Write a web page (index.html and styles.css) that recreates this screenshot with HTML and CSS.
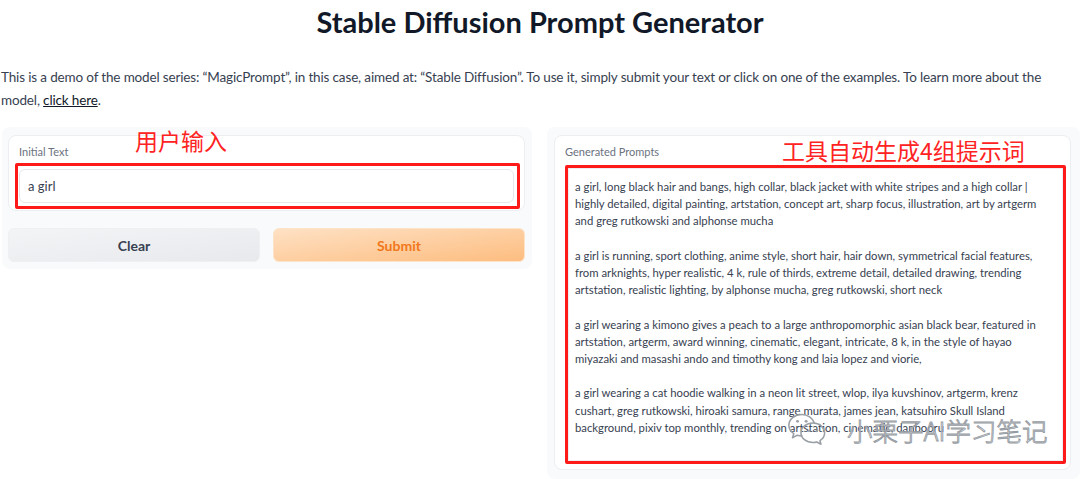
FILE: index.html
```html
<!DOCTYPE html>
<html lang="en">
<head>
<meta charset="utf-8">
<title>Stable Diffusion Prompt Generator</title>
<link rel="stylesheet" href="styles.css">
</head>
<body>
<h1 class="title">Stable Diffusion Prompt Generator</h1>
<p class="desc">This is a demo of the model series: “MagicPrompt”, in this case, aimed at: “Stable Diffusion”. To use it, simply submit your text or click on one of the examples. To learn more about the model, <a class="link" href="#">click here</a>.</p>
<div class="row">
  <div class="col col-left">
    <div class="block">
      <span class="label">Initial Text</span>
      <div class="mark mark-input"><div class="input">a girl</div></div>
    </div>
    <div class="buttons">
      <button class="btn btn-clear">Clear</button>
      <button class="btn btn-submit">Submit</button>
    </div>
    <span class="note note-left">用户输入</span>
  </div>
  <div class="col col-right">
    <div class="block block-out">
      <span class="label">Generated Prompts</span>
      <div class="mark mark-output"><div class="output">a girl, long black hair and bangs, high collar, black jacket with white stripes and a high collar | highly detailed, digital painting, artstation, concept art, sharp focus, illustration, art by artgerm and greg rutkowski and alphonse mucha

a girl is running, sport clothing, anime style, short hair, hair down, symmetrical facial features, from arknights, hyper realistic, 4 k, rule of thirds, extreme detail, detailed drawing, trending artstation, realistic lighting, by alphonse mucha, greg rutkowski, short neck

a girl wearing a kimono gives a peach to a large anthropomorphic asian black bear, featured in artstation, artgerm, award winning, cinematic, elegant, intricate, 8 k, in the style of hayao miyazaki and masashi ando and timothy kong and laia lopez and viorie,

a girl wearing a cat hoodie walking in a neon lit street, wlop, ilya kuvshinov, artgerm, krenz cushart, greg rutkowski, hiroaki samura, range murata, james jean, katsuhiro Skull Island background, pixiv top monthly, trending on artstation, cinematic, danbooru</div></div>
    </div>
    <span class="note note-right">工具自动生成4组提示词</span>
    <div class="watermark">
      <svg class="wm-icon" width="40" height="38" viewBox="0 0 46 44">
        <path d="M31.5 13.8C29.5 8.2 23.8 4 17 4C8.7 4 2 9.6 2 16.5c0 4 2.2 7.5 5.7 9.8L6.2 31l5.6-3c1.6.5 3.4.8 5.2.8" fill="none" stroke="#9aa0a6" stroke-width="1.8" stroke-linecap="round" stroke-linejoin="round"/>
        <path d="M30 14c-8 0-14 5-14 11.3S22 36.5 30 36.5c1.5 0 3-.2 4.4-.6l4.8 2.6-1.2-4.1c3.3-2 5.4-5.2 5.4-8.8C43.4 19 37.4 14 30 14z" fill="none" stroke="#9aa0a6" stroke-width="1.8" stroke-linejoin="round"/>
        <circle cx="12" cy="12" r="1.7" fill="#9aa0a6"/>
        <circle cx="22" cy="12" r="1.7" fill="#9aa0a6"/>
        <circle cx="25.5" cy="23" r="1.5" fill="#9aa0a6"/>
        <circle cx="34.5" cy="23" r="1.5" fill="#9aa0a6"/>
      </svg>
      <span class="wm-text">小栗子AI学习笔记</span>
    </div>
  </div>
</div>
</body>
</html>
```

FILE: styles.css
```css
html, body {
  margin: 0;
  padding: 0;
  background: #ffffff;
}

body {
  font-family: "Lato", "Noto Sans", sans-serif;
  color: #374151;
  width: 1080px;
  height: 479px;
  overflow: hidden;
}

.title {
  margin: 0;
  height: 44px;
  line-height: 44px;
  text-align: center;
  font-size: 29px;
  font-weight: 700;
  color: #111827;
}

.desc {
  margin: 22px 0 0 1px;
  font-size: 13.5px;
  letter-spacing: -0.15px;
  line-height: 23px;
  color: #374151;
}

.link {
  color: #111827;
  text-decoration: underline;
}

.row {
  display: flex;
  align-items: flex-start;
  gap: 15px;
  margin-top: 15px;
  padding-left: 2px;
}

.col {
  position: relative;
  background: #f9fafb;
  border-radius: 8px;
  box-sizing: border-box;
}

.col-left {
  width: 530px;
  padding: 8px 7px 7px 6px;
}

.col-right {
  flex: 1;
  padding: 8px 9px 9px 7px;
}

.block {
  background: #ffffff;
  border: 1px solid #eceef1;
  border-radius: 8px;
  padding: 9px 10px 1px 10px;
}

.label {
  display: block;
  font-size: 11px;
  line-height: 14px;
  color: #6b7280;
}

.mark {
  border: 3px solid #ff1a1a;
  border-radius: 2px;
}

.mark-input {
  margin: 4px -6px 0 -4px;
  padding: 3px 3px 3px 1px;
}

.input {
  height: 32px;
  line-height: 32px;
  border: 1px solid #e5e7eb;
  border-radius: 6px;
  padding-left: 8px;
  font-size: 13px;
  color: #374151;
  background: #fff;
}

.buttons {
  display: flex;
  gap: 13px;
  margin-top: 17px;
}

.btn {
  flex: 1;
  height: 34px;
  border: 1px solid #eef0f2;
  border-radius: 6px;
  font-family: inherit;
  font-size: 14px;
  font-weight: 700;
}

.btn-clear {
  background: linear-gradient(to bottom right, #f3f4f6, #e7e9ec);
  color: #374151;
}

.btn-submit {
  background: linear-gradient(to bottom right, #fee1c4, #fdbd80);
  border-color: #fde3c8;
  color: #f0781a;
}

.block-out {
  padding-bottom: 5px;
}

.mark-output {
  margin: 6px -6px 0 0;
  height: 299px;
  box-sizing: border-box;
}

.output {
  height: 100%;
  box-sizing: border-box;
  border: 1px solid #eceef1;
  padding: 9px 6px 8px 6px;
  font-size: 11.3px;
  line-height: 17.2px;
  white-space: pre-wrap;
  color: #374151;
}

.note {
  position: absolute;
  color: #ff2222;
  font-family: "Noto Sans CJK SC", sans-serif;
  font-weight: 400;
  line-height: 1;
}

.note-left {
  left: 133px;
  top: 2px;
  font-size: 23px;
}

.note-right {
  left: 235px;
  top: 12px;
  font-size: 23px;
}

.watermark {
  position: absolute;
  left: 240px;
  top: 284px;
  display: flex;
  align-items: center;
  gap: 20px;
  white-space: nowrap;
}

.wm-text {
  font-family: "Noto Sans CJK SC", sans-serif;
  font-size: 25.5px;
  line-height: 36px;
  font-weight: 300;
  color: rgba(255, 255, 255, 0.55);
  -webkit-text-stroke: 0.9px #959ba2;
}
```
